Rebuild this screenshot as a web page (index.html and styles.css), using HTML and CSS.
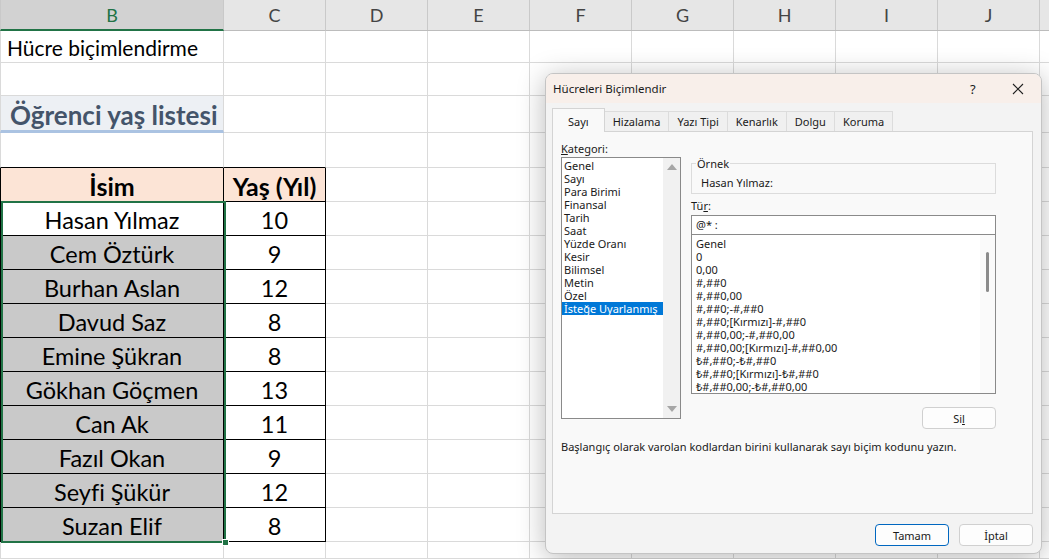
FILE: index.html
```html
<!DOCTYPE html>
<html lang="tr">
<head>
    <meta charset="UTF-8">
    <title>Hücre biçimlendirme</title>
    <link rel="stylesheet" href="styles.css">
</head>
<body>
    <div class="sheet">
        <div class="row head">
            <div class="cell b sel">B</div>
            <div class="cell c">C</div>
            <div class="rest letters">
                <span>D</span><span>E</span><span>F</span><span>G</span><span>H</span><span>I</span><span>J</span><span></span>
            </div>
        </div>
        <div class="row r1"><div class="cell b note">Hücre biçimlendirme</div><div class="cell c"></div><div class="rest"></div></div>
        <div class="row r2"><div class="cell b"></div><div class="cell c"></div><div class="rest"></div></div>
        <div class="row r3"><div class="cell b title">Öğrenci yaş listesi</div><div class="cell c"></div><div class="rest"></div></div>
        <div class="row r4"><div class="cell b above"></div><div class="cell c above"></div><div class="rest"></div></div>
        <div class="row"><div class="cell b t th">İsim</div><div class="cell c t th">Yaş (Yıl)</div><div class="rest"></div></div>
        <div class="row"><div class="cell b t">Hasan Yılmaz</div><div class="cell c t">10</div><div class="rest"></div></div>
        <div class="row"><div class="cell b t gray">Cem Öztürk</div><div class="cell c t">9</div><div class="rest"></div></div>
        <div class="row"><div class="cell b t gray">Burhan Aslan</div><div class="cell c t">12</div><div class="rest"></div></div>
        <div class="row"><div class="cell b t gray">Davud Saz</div><div class="cell c t">8</div><div class="rest"></div></div>
        <div class="row"><div class="cell b t gray">Emine Şükran</div><div class="cell c t">8</div><div class="rest"></div></div>
        <div class="row"><div class="cell b t gray">Gökhan Göçmen</div><div class="cell c t">13</div><div class="rest"></div></div>
        <div class="row"><div class="cell b t gray">Can Ak</div><div class="cell c t">11</div><div class="rest"></div></div>
        <div class="row"><div class="cell b t gray">Fazıl Okan</div><div class="cell c t">9</div><div class="rest"></div></div>
        <div class="row"><div class="cell b t gray">Seyfi Şükür</div><div class="cell c t">12</div><div class="rest"></div></div>
        <div class="row"><div class="cell b t gray">Suzan Elif</div><div class="cell c t">8</div><div class="rest"></div></div>
        <div class="row last"><div class="cell b"></div><div class="cell c"></div><div class="rest"></div></div>
    </div>

    <!-- selected range B6:B15 -->
    <div class="selection"><span class="handle"></span></div>

    <div class="dialog">
        <div class="titlebar">
            <span class="dtitle">Hücreleri Biçimlendir</span>
            <span class="help">?</span>
            <svg class="close" width="12" height="12" viewBox="0 0 12 12">
                <path d="M1 1L11 11M11 1L1 11" stroke="#222" stroke-width="1.1" fill="none"/>
            </svg>
        </div>
        <div class="dbody">
            <div class="tabs">
                <span class="tab active">Sayı</span>
                <span class="tab">Hizalama</span>
                <span class="tab">Yazı Tipi</span>
                <span class="tab">Kenarlık</span>
                <span class="tab">Dolgu</span>
                <span class="tab">Koruma</span>
            </div>
            <div class="panel">
                <div class="panel-top">
                    <div class="cat-col">
                        <div class="label"><u>K</u>ategori:</div>
                        <div class="listbox cat">
                            <ul>
                                <li>Genel</li>
                                <li>Sayı</li>
                                <li>Para Birimi</li>
                                <li>Finansal</li>
                                <li>Tarih</li>
                                <li>Saat</li>
                                <li>Yüzde Oranı</li>
                                <li>Kesir</li>
                                <li>Bilimsel</li>
                                <li>Metin</li>
                                <li>Özel</li>
                                <li class="picked">İsteğe Uyarlanmış</li>
                            </ul>
                            <div class="vscroll">
                                <span class="arrow up"></span>
                                <span class="arrow down"></span>
                            </div>
                        </div>
                    </div>
                    <div class="fmt-col">
                        <fieldset class="sample">
                            <legend>Örnek</legend>
                            <div>Hasan Yılmaz:</div>
                        </fieldset>
                        <div class="label type-label">Tü<u>r</u>:</div>
                        <div class="input">@* :</div>
                        <div class="listbox types">
                            <ul>
                                <li>Genel</li>
                                <li>0</li>
                                <li>0,00</li>
                                <li>#,##0</li>
                                <li>#,##0,00</li>
                                <li>#,##0;-#,##0</li>
                                <li>#,##0;[Kırmızı]-#,##0</li>
                                <li>#,##0,00;-#,##0,00</li>
                                <li>#,##0,00;[Kırmızı]-#,##0,00</li>
                                <li>₺#,##0;-₺#,##0</li>
                                <li>₺#,##0;[Kırmızı]-₺#,##0</li>
                                <li>₺#,##0,00;-₺#,##0,00</li>
                            </ul>
                            <div class="vscroll thin"><span class="thumb"></span></div>
                        </div>
                        <div class="btn-row"><button class="btn">Si<u>l</u></button></div>
                    </div>
                </div>
                <p class="desc">Başlangıç olarak varolan kodlardan birini kullanarak sayı biçim kodunu yazın.</p>
            </div>
            <div class="footer">
                <button class="btn primary">Tamam</button>
                <button class="btn">İptal</button>
            </div>
        </div>
    </div>
</body>
</html>
```

FILE: styles.css
```css
*{
    margin: 0;
    padding: 0;
    box-sizing: border-box;
}
body{
    width: 1049px;
    height: 559px;
    overflow: hidden;
    position: relative;
    background-color: #fff;
    font-family: Lato, "Noto Sans", sans-serif;
    color: #000;
}

/* worksheet */
.sheet{
    display: flex;
    flex-direction: column;
    height: 559px;
}
.row{
    display: flex;
    flex: none;
    height: 34px;
}
.cell{
    flex: none;
    display: flex;
    align-items: center;
    justify-content: center;
    border-right: 1px solid #dadada;
    border-bottom: 1px solid #dadada;
    font-size: 23.5px;
    white-space: nowrap;
}
.b{
    width: 224px;
    border-left: 1px solid #dadada;
}
.c{
    width: 102px;
}
.rest{
    flex: 1;
    min-width: 0;
    overflow: hidden;
    border-bottom: 1px solid #dadada;
    background: repeating-linear-gradient(to right, transparent 0 101px, #dadada 101px 102px);
}
.head{
    height: 31px;
    background-color: #e6e6e6;
    color: #444;
}
.head .cell,
.head .rest{
    border-color: #c9c9c9;
    border-bottom-color: #bcbcbc;
    font-size: 18px;
    background: none;
}
.head .letters{
    display: flex;
}
.head .letters span{
    width: 102px;
    flex: none;
    display: flex;
    align-items: center;
    justify-content: center;
    border-right: 1px solid #c9c9c9;
}
.head .sel{
    background-color: #d2d2d2;
    color: #217346;
    border-bottom: 2px solid #217346;
}
.r1{ height: 32px; }
.r2{ height: 33px; }
.r3{ height: 37px; }
.r4{ height: 35px; }
.last{ flex: 1; }
.note{
    justify-content: flex-start;
    padding: 2px 0 0 6px;
    font-size: 21px;
}
.title{
    justify-content: flex-start;
    padding: 4px 0 0 9px;
    background-color: #edf0f4;
    border-bottom: 3px solid #abc3e2;
    color: #44546a;
    font-size: 26px;
    font-weight: bold;
}
.above{
    border-bottom-color: #000;
}
.t{
    padding-top: 3px;
    border-right-color: #000;
    border-bottom-color: #000;
}
.b.t{
    border-left-color: #000;
}
.th{
    background-color: #fce4d6;
    font-weight: bold;
    font-size: 25px;
}
.gray{
    background-color: #c9c9c9;
}
.selection{
    position: absolute;
    left: 1px;
    top: 201px;
    width: 225px;
    height: 342px;
    border: 2px solid #217346;
}
.handle{
    position: absolute;
    right: -5px;
    bottom: -5px;
    width: 7px;
    height: 7px;
    background-color: #217346;
    border: 1px solid #fff;
}

/* format cells dialog */
.dialog{
    position: absolute;
    left: 545px;
    top: 73px;
    width: 497px;
    height: 481px;
    border: 1px solid #c4c4c4;
    border-radius: 8px;
    background-color: #f3f3f3;
    box-shadow: 0 4px 28px rgba(0,0,0,0.28);
    overflow: hidden;
    font-family: "Noto Sans", "Open Sans", sans-serif;
    font-size: 11px;
    color: #1a1a1a;
}
.titlebar{
    display: flex;
    align-items: center;
    height: 29px;
    padding-left: 7px;
    background-color: #f8efea;
}
.dtitle{
    flex: 1;
    font-size: 11.5px;
}
.help{
    width: 14px;
    font-size: 13px;
    margin-right: 28px;
}
.close{
    margin-right: 17px;
}
.dbody{
    padding: 5px 8px 0 6px;
}
.tabs{
    display: flex;
    align-items: flex-end;
    height: 23px;
}
.tab{
    height: 20px;
    line-height: 20px;
    padding: 0 8px;
    border: 1px solid #dcdcdc;
    border-bottom: none;
    border-left: none;
    background-color: #f0f0f0;
}
.tab.active{
    height: 24px;
    padding: 3px 15px 0;
    margin-bottom: -1px;
    border-left: 1px solid #d4d4d4;
    border-color: #d4d4d4;
    background-color: #f9f9f9;
    position: relative;
}
.panel{
    height: 383px;
    border: 1px solid #d4d4d4;
    background-color: #f9f9f9;
    padding: 9px 0 0 8px;
}
.panel-top{
    display: flex;
    gap: 10px;
}
.label{
    height: 16px;
    line-height: 15px;
}
.listbox{
    display: flex;
    background-color: #fff;
    border: 1px solid #8a8a8a;
}
.listbox ul{
    list-style: none;
    flex: 1;
}
.listbox li{
    height: 13px;
    line-height: 13px;
    white-space: nowrap;
}
.cat{
    width: 120px;
    height: 262px;
}
.cat ul{
    padding-top: 1px;
}
.cat li{
    padding-left: 2px;
}
.cat li.picked{
    background-color: #0078d7;
    color: #fff;
}
.vscroll{
    width: 17px;
    display: flex;
    flex-direction: column;
    justify-content: space-between;
    align-items: center;
    padding: 6px 0;
    background-color: #f1f1f1;
}
.arrow{
    width: 0;
    height: 0;
    border-left: 5px solid transparent;
    border-right: 5px solid transparent;
}
.arrow.up{
    border-bottom: 6px solid #a6a6a6;
}
.arrow.down{
    border-top: 6px solid #a6a6a6;
}
.fmt-col{
    width: 305px;
}
.sample{
    margin-top: 16px;
    height: 37px;
    border: 1px solid #dcdcdc;
    padding: 0 9px;
}
.sample legend{
    margin-left: -5px;
    padding: 0 1px;
    line-height: 13px;
}
.sample div{
    margin-top: 6px;
    line-height: 13px;
}
.type-label{
    margin-top: 4px;
    height: 17px;
}
.input{
    height: 20px;
    line-height: 18px;
    padding-left: 4px;
    background-color: #fff;
    border: 1px solid #8a8a8a;
}
.types{
    height: 159px;
    border-top: none;
}
.types ul{
    padding: 2px 0 0 4px;
}
.vscroll.thin{
    width: 15px;
    background-color: #fafafa;
    justify-content: flex-start;
    padding: 17px 0 0;
}
.thumb{
    width: 3px;
    height: 40px;
    border-radius: 2px;
    background-color: #8b8b8b;
}
.btn-row{
    display: flex;
    justify-content: flex-end;
    margin-top: 13px;
}
.btn{
    width: 74px;
    height: 22px;
    border: 1px solid #d0d0d0;
    border-radius: 4px;
    background-color: #fdfdfd;
    font-family: inherit;
    font-size: 11px;
    color: #1a1a1a;
}
.btn.primary{
    border-color: #0067c0;
}
.desc{
    margin-top: 11px;
    line-height: 13px;
}
.footer{
    display: flex;
    justify-content: flex-end;
    gap: 10px;
    margin-top: 10px;
    padding-right: 0;
}
```
